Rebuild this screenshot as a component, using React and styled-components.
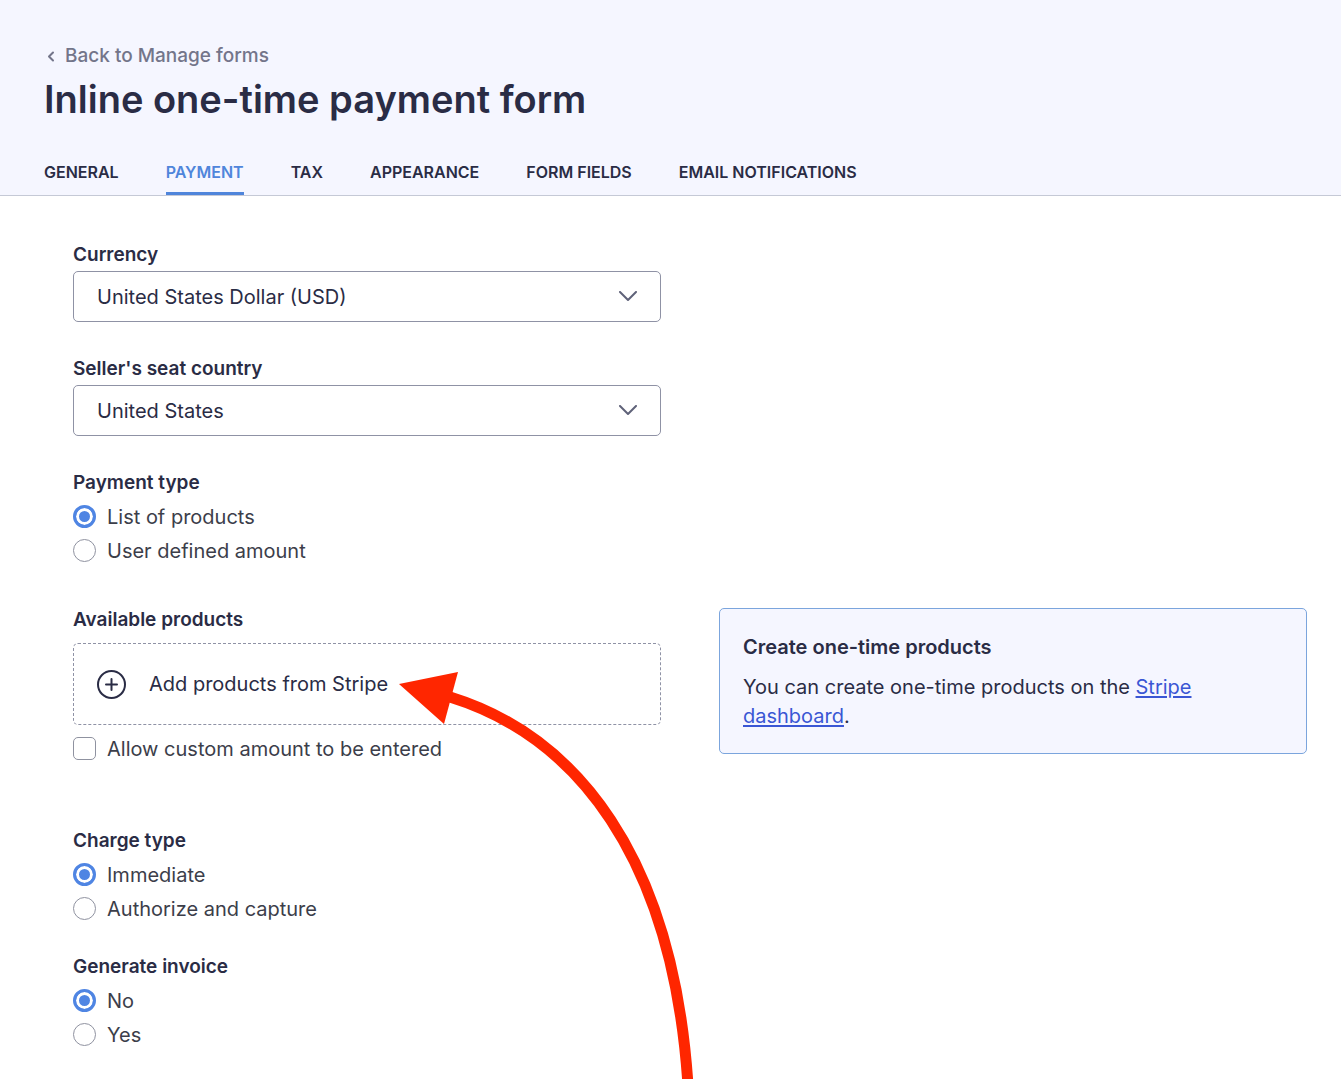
import { useState } from "react";
import styled, { createGlobalStyle } from "styled-components";

const GlobalStyle = createGlobalStyle`
* {
    box-sizing: border-box;
}

body {
    margin: 0;
    background-color: #ffffff;
    color: #2a2c45;
    font-family: Inter, "Liberation Sans", sans-serif;
    font-size: 20px;
    line-height: 24px;
}
`

const Page = styled.div`
display: flex;
flex-direction: column;
min-height: 100vh;
overflow: hidden;
`

const Header = styled.header`
display: flex;
flex-direction: column;
align-items: flex-start;
padding: 44px 44px 0;
background-color: #f5f6ff;
border-bottom: 1px solid #c5c9d6;
`

const BackLink = styled.a`
display: flex;
align-items: center;
gap: 8px;
color: #73758a;
font-size: 19px;
font-weight: 500;
text-decoration: none;

& svg {
    width: 13px;
    height: 13px;
}
`

const Title = styled.h1`
margin: 7px 0 37px;
font-size: 38px;
font-weight: 600;
line-height: 48px;
`

const Tabs = styled.nav`
display: flex;
gap: 47px;
`

const Tab = styled.a`
padding-bottom: 8px;
border-bottom: 3px solid ${({ $active }) => ($active ? "#4f85db" : "transparent")};
color: ${({ $active }) => ($active ? "#4f85db" : "#2a2c45")};
font-size: 16px;
font-weight: 600;
text-decoration: none;
text-transform: uppercase;
`

const Form = styled.form`
display: flex;
flex-direction: column;
padding: 47px 34px 30px 73px;
`

const Row = styled.div`
display: grid;
grid-template-columns: 1fr 1fr;
column-gap: 58px;
align-items: start;
margin-bottom: ${({ $gap }) => $gap}px;
`

const Label = styled.label`
display: block;
margin-bottom: 4px;
font-size: 19px;
font-weight: 600;
`

const SelectBox = styled.div`
display: grid;
align-items: center;

& > * {
    grid-area: 1 / 1;
}

& svg {
    justify-self: end;
    width: 20px;
    height: 12px;
    margin-right: 23px;
    pointer-events: none;
}
`

const Select = styled.select`
width: 100%;
height: 51px;
padding: 1px 23px 0;
appearance: none;
background-color: #ffffff;
border: 1px solid #8f92a5;
border-radius: 5px;
color: #2a2c45;
font: inherit;
`

const Group = styled.fieldset`
display: flex;
flex-direction: column;
min-width: 0;
margin: 0;
padding: 0;
border: 0;
`

const Legend = styled.legend`
margin-bottom: 4px;
padding: 0;
font-size: 19px;
font-weight: 600;
`

const Option = styled.label`
display: flex;
align-items: center;
gap: 11px;
height: 34px;
color: #3c3e4a;

& span {
    padding-top: 1px;
}
`

const Radio = styled.input`
flex: none;
width: 23px;
height: 23px;
margin: 0;
appearance: none;
background-color: #ffffff;
border: 1px solid #8f92a0;
border-radius: 50%;

&:checked {
    background-color: #4f85e3;
    border: 3px solid #4f85e3;
    box-shadow: inset 0 0 0 3px #ffffff;
}
`

const Checkbox = styled.input`
flex: none;
width: 23px;
height: 23px;
margin: 0;
appearance: none;
background-color: #ffffff;
border: 1px solid #8f92a0;
border-radius: 5px;

&:checked {
    background-color: #4f85e3;
}
`

const ProductsTitle = styled.h2`
margin: 0 0 11px;
font-size: 19px;
font-weight: 600;
line-height: 24px;
`

const AddBox = styled.div`
position: relative;
margin-bottom: 6px;
`

const AddButton = styled.button`
display: flex;
align-items: center;
gap: 22px;
width: 100%;
height: 82px;
padding: 0 22px;
background-color: #ffffff;
border: 1px dashed #8f92a5;
border-radius: 5px;
color: #2a2c45;
font: inherit;
cursor: pointer;

& svg {
    width: 31px;
    height: 31px;
}
`

const Arrow = styled.svg`
position: absolute;
top: 29px;
left: 326px;
width: 296px;
height: 416px;
pointer-events: none;
`

const Info = styled.aside`
padding: 24px 23px 22px;
background-color: #f5f6ff;
border: 1px solid #7ba5dd;
border-radius: 5px;
line-height: 29px;

& h2 {
    margin: 0 0 11px;
    font-size: 20px;
    font-weight: 600;
    line-height: 29px;
}

& p {
    max-width: 470px;
    margin: 0;
}

& a {
    color: #3a56d4;
    text-underline-offset: 2px;
}
`

const Chevron = () => (
    <svg viewBox="0 0 20 12" fill="none" stroke="#5f6279" strokeWidth="2" strokeLinecap="round" strokeLinejoin="round" aria-hidden="true">
        <path d="M2 1l8 8 8-8" />
    </svg>
);

const SelectField = ({ id, label, options }) => (
    <div>
        <Label htmlFor={id}>{label}</Label>
        <SelectBox>
            <Select id={id}>
                {options.map((option) => (
                    <option key={option}>{option}</option>
                ))}
            </Select>
            <Chevron />
        </SelectBox>
    </div>
);

const RadioGroup = ({ name, legend, options }) => {
    const [value, setValue] = useState(options[0]);

    return (
        <Group>
            <Legend>{legend}</Legend>
            {options.map((option) => (
                <Option key={option}>
                    <Radio type="radio" name={name} checked={value === option} onChange={() => setValue(option)} />
                    <span>{option}</span>
                </Option>
            ))}
        </Group>
    );
};

const tabs = ["General", "Payment", "Tax", "Appearance", "Form fields", "Email notifications"];

const App = () => {
    return (
        <Page>
            <GlobalStyle />
            <Header>
                <BackLink href="#forms">
                    <svg viewBox="0 0 13 13" fill="none" stroke="currentColor" strokeWidth="2" strokeLinecap="round" strokeLinejoin="round" aria-hidden="true">
                        <path d="M9 2.5l-4 4 4 4" />
                    </svg>
                    Back to Manage forms
                </BackLink>
                <Title>Inline one-time payment form</Title>
                <Tabs>
                    {tabs.map((tab) => (
                        <Tab key={tab} href="#tab" $active={tab === "Payment"}>{tab}</Tab>
                    ))}
                </Tabs>
            </Header>
            <Form>
                <Row $gap={35}>
                    <SelectField id="currency" label="Currency" options={["United States Dollar (USD)", "Euro (EUR)"]} />
                </Row>
                <Row $gap={35}>
                    <SelectField id="country" label="Seller's seat country" options={["United States", "Germany"]} />
                </Row>
                <Row $gap={41}>
                    <RadioGroup name="payment" legend="Payment type" options={["List of products", "User defined amount"]} />
                </Row>
                <Row $gap={64}>
                    <div>
                        <ProductsTitle>Available products</ProductsTitle>
                        <AddBox>
                            <AddButton type="button">
                                <svg viewBox="0 0 31 31" fill="none" stroke="currentColor" strokeWidth="2" strokeLinecap="round" aria-hidden="true">
                                    <circle cx="15.5" cy="15.5" r="13.5" />
                                    <path d="M15.5 10v11M10 15.5h11" />
                                </svg>
                                Add products from Stripe
                            </AddButton>
                            <Arrow viewBox="0 0 296 416" aria-hidden="true">
                                <path d="M51 25C177 64 274 184 289 413" fill="none" stroke="#ff2600" strokeWidth="11" />
                                <path d="M0 12L59 0 45 52z" fill="#ff2600" />
                            </Arrow>
                        </AddBox>
                        <Option>
                            <Checkbox type="checkbox" />
                            <span>Allow custom amount to be entered</span>
                        </Option>
                    </div>
                    <Info>
                        <h2>Create one-time products</h2>
                        <p>
                            You can create one-time products on the <a href="#stripe">Stripe dashboard</a>.
                        </p>
                    </Info>
                </Row>
                <Row $gap={30}>
                    <RadioGroup name="charge" legend="Charge type" options={["Immediate", "Authorize and capture"]} />
                </Row>
                <Row $gap={0}>
                    <RadioGroup name="invoice" legend="Generate invoice" options={["No", "Yes"]} />
                </Row>
            </Form>
        </Page>
    );
};

export default App;
